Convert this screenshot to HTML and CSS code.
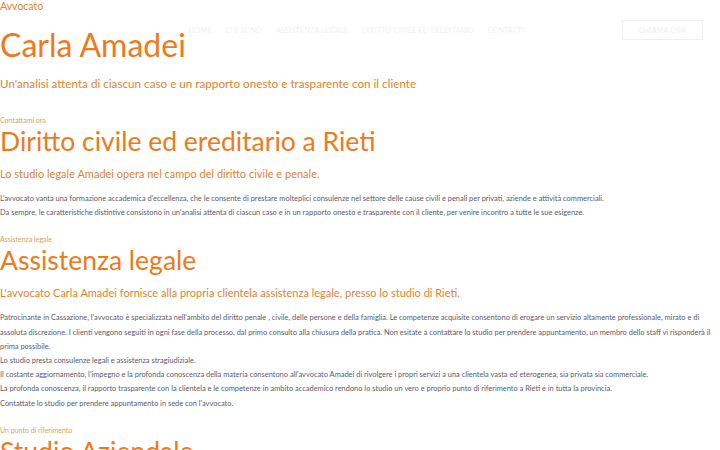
FILE: index.html
```html
<!DOCTYPE html>
<html lang="it">
<head>
<meta charset="utf-8">
<title>Avv. Carla Amadei</title>
<link rel="stylesheet" href="styles.css">
</head>
<body>
<header class="site-header">
  <nav class="main-nav">
    <a class="nav-link">HOME</a>
    <a class="nav-link">CHI SONO</a>
    <a class="nav-link">ASSISTENZA LEGALE</a>
    <a class="nav-link">DIRITTO CIVILE ED EREDITARIO</a>
    <a class="nav-link">CONTATTI</a>
  </nav>
  <a class="call-btn">CHIAMA ORA</a>
</header>

<section class="hero">
  <p class="hero-kicker">Avvocato</p>
  <h1 class="hero-title">Carla Amadei</h1>
  <p class="hero-sub">Un'analisi attenta di ciascun caso e un rapporto onesto e trasparente con il cliente</p>
</section>

<section class="block block-first">
  <p class="kicker">Contattami ora</p>
  <h2 class="title">Diritto civile ed ereditario a Rieti</h2>
  <p class="subtitle">Lo studio legale Amadei opera nel campo del diritto civile e penale.</p>
  <div class="body-text">
    <p>L'avvocato vanta una formazione accademica d'eccellenza, che le consente di prestare molteplici consulenze nel settore delle cause civili e penali per privati, aziende e attività commerciali.</p>
    <p>Da sempre, le caratteristiche distintive consistono in un'analisi attenta di ciascun caso e in un rapporto onesto e trasparente con il cliente, per venire incontro a tutte le sue esigenze.</p>
  </div>
</section>

<section class="block">
  <p class="kicker">Assistenza legale</p>
  <h2 class="title">Assistenza legale</h2>
  <p class="subtitle">L'avvocato Carla Amadei fornisce alla propria clientela assistenza legale, presso lo studio di Rieti.</p>
  <div class="body-text">
    <p>Patrocinante in Cassazione, l'avvocato è specializzata nell'ambito del diritto penale , civile, delle persone e della famiglia. Le competenze acquisite consentono di erogare un servizio altamente professionale, mirato e di assoluta discrezione. I clienti vengono seguiti in ogni fase della processo, dal primo consulto alla chiusura della pratica. Non esitate a contattare lo studio per prendere appuntamento, un membro dello staff vi risponderà il prima possibile.</p>
    <p>Lo studio presta consulenze legali e assistenza stragiudiziale.</p>
    <p>Il costante aggiornamento, l'impegno e la profonda conoscenza della materia consentono all'avvocato Amadei di rivolgere i propri servizi a una clientela vasta ed eterogenea, sia privata sia commerciale.</p>
    <p>La profonda conoscenza, il rapporto trasparente con la clientela e le competenze in ambito accademico rendono lo studio un vero e proprio punto di riferimento a Rieti e in tutta la provincia.</p>
    <p>Contattate lo studio per prendere appuntamento in sede con l'avvocato.</p>
  </div>
</section>

<section class="block">
  <p class="kicker">Un punto di riferimento</p>
  <h2 class="title">Studio Aziendale</h2>
</section>
</body>
</html>
```

FILE: styles.css
```css
html, body {
  margin: 0;
  padding: 0;
  background: #ffffff;
}

body {
  font-family: "Lato", "Liberation Sans", sans-serif;
  position: relative;
  overflow: hidden;
  height: 450px;
}

p, h1, h2 {
  margin: 0;
}

.site-header {
  position: absolute;
  top: 20px;
  left: 0;
  right: 0;
  display: flex;
  align-items: center;
  justify-content: flex-end;
  padding-right: 17px;
  gap: 98px;
}

.main-nav {
  display: flex;
  gap: 14px;
}

.nav-link {
  font-size: 7px;
  letter-spacing: 0.3px;
  color: #f0f0f0;
  text-decoration: none;
}

.call-btn {
  font-size: 7px;
  color: #eeeeee;
  border: 1px solid #f0f0f0;
  padding: 5px 16px;
  letter-spacing: 0.3px;
}

.hero-kicker {
  font-size: 10.5px;
  color: #e8812e;
  line-height: 12px;
}

.hero-title {
  font-weight: 400;
  font-size: 32px;
  line-height: 38px;
  margin-top: 14px;
  color: #ee7a1d;
}

.hero-sub {
  margin-top: 11px;
  font-size: 11.7px;
  line-height: 16px;
  color: #e8812e;
}

.block-first {
  margin-top: 24px;
}

.block {
  padding-bottom: 14px;
}

.kicker {
  font-size: 7px;
  line-height: 10px;
  color: #d9a25e;
}

.title {
  font-weight: 400;
  font-size: 26.5px;
  line-height: 32px;
  color: #ee7a1d;
}

.subtitle {
  margin-top: 10px;
  font-size: 11px;
  line-height: 14px;
  color: #e8812e;
}

.body-text {
  margin-top: 11px;
  font-size: 7.45px;
  line-height: 14.2px;
  color: #5b5a6c;
}
```
